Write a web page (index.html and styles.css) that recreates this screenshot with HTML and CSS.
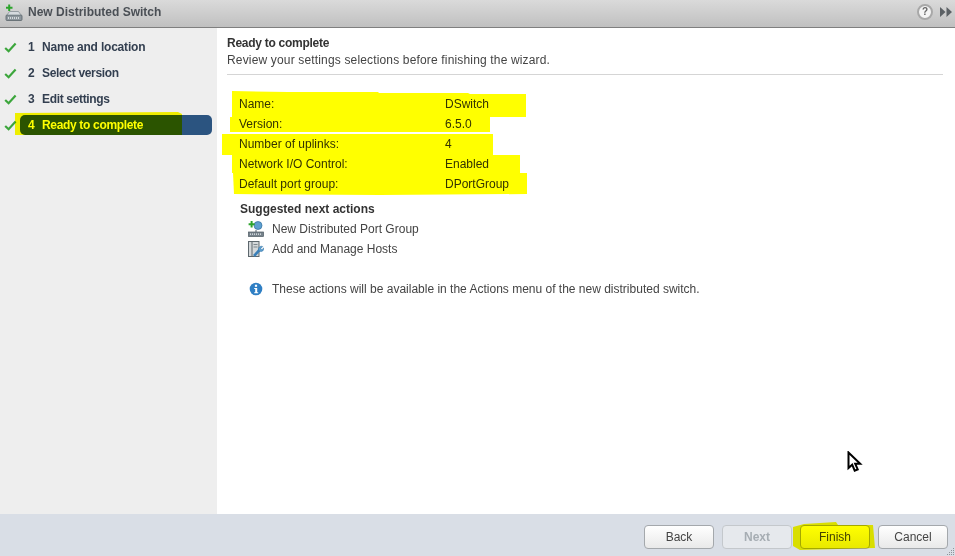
FILE: index.html
```html
<!DOCTYPE html>
<html lang="en">
<head>
<meta charset="utf-8">
<title>New Distributed Switch</title>
<link rel="stylesheet" href="styles.css">
</head>
<body>
<div class="wizard">
  <header class="titlebar">
    <svg class="title-icon" width="18" height="18" viewBox="0 0 18 18">
      <rect x="1" y="11" width="16" height="5.500" rx="1" fill="#8d969c" stroke="#59636a" stroke-width=".8"/>
      <path d="M2 11 4.500 7.500h9L16 11z" fill="#d5dade" stroke="#7d878d" stroke-width=".7"/>
      <path d="M3 14h12" stroke="#e9eef0" stroke-width="1.400" stroke-dasharray="1 1"/>
      <path d="M4.200 .5v6.500M1 3.700h6.500" stroke="#2da42d" stroke-width="2"/>
    </svg>
    <span class="title-text">New Distributed Switch</span>
    <span class="title-tools">
      <span class="help">?</span>
      <svg width="12" height="10" viewBox="0 0 12 10"><path d="M0 0l5.500 5-5.500 5zM6.500 0l5.500 5-5.500 5z" fill="#5c6165"/></svg>
    </span>
  </header>
  <div class="body">
    <nav class="steps">
      <div class="step"><svg class="check" width="13" height="11" viewBox="0 0 13 11"><path d="M1.200 6 4.600 9.200 11.600 1.600" fill="none" stroke="#3ca63c" stroke-width="2.200"/></svg><span class="pill"><b class="num">1</b><b class="label">Name and location</b></span></div>
      <div class="step"><svg class="check" width="13" height="11" viewBox="0 0 13 11"><path d="M1.200 6 4.600 9.200 11.600 1.600" fill="none" stroke="#3ca63c" stroke-width="2.200"/></svg><span class="pill"><b class="num">2</b><b class="label tight">Select version</b></span></div>
      <div class="step"><svg class="check" width="13" height="11" viewBox="0 0 13 11"><path d="M1.200 6 4.600 9.200 11.600 1.600" fill="none" stroke="#3ca63c" stroke-width="2.200"/></svg><span class="pill"><b class="num">3</b><b class="label tight">Edit settings</b></span></div>
      <div class="step"><svg class="check" width="13" height="11" viewBox="0 0 13 11"><path d="M1.200 6 4.600 9.200 11.600 1.600" fill="none" stroke="#3ca63c" stroke-width="2.200"/></svg><span class="pill active"><b class="num">4</b><b class="label tight">Ready to complete</b></span></div>
    </nav>
    <main class="content">
      <h1 class="page-title">Ready to complete</h1>
      <p class="page-sub">Review your settings selections before finishing the wizard.</p>
      <dl class="summary">
        <div class="row"><dt>Name:</dt><dd>DSwitch</dd></div>
        <div class="row"><dt>Version:</dt><dd>6.5.0</dd></div>
        <div class="row"><dt>Number of uplinks:</dt><dd>4</dd></div>
        <div class="row"><dt>Network I/O Control:</dt><dd>Enabled</dd></div>
        <div class="row"><dt>Default port group:</dt><dd>DPortGroup</dd></div>
      </dl>
      <h2 class="next-title">Suggested next actions</h2>
      <div class="action">
        <svg class="a-icon" width="16" height="16" viewBox="0 0 16 16">
          <circle cx="10" cy="4.500" r="4" fill="#5d9fd0" stroke="#2f6f9e" stroke-width=".7"/>
          <path d="M3.600 0v6.400M.6 3.200h6" stroke="#2da42d" stroke-width="2"/>
          <path d="M8 9v2" stroke="#55606a"/>
          <rect x=".5" y="11" width="15" height="4.500" fill="#77838c" stroke="#4c5860" stroke-width=".7"/>
          <path d="M2 13.200h12" stroke="#e9eef0" stroke-width="1.200" stroke-dasharray="1 1"/>
        </svg>
        <span>New Distributed Port Group</span>
      </div>
      <div class="action">
        <svg class="a-icon" width="16" height="16" viewBox="0 0 16 16">
          <rect x=".5" y=".5" width="10.500" height="15" fill="#d4d8da" stroke="#5d676d"/>
          <path d="M4 .5v15" stroke="#5d676d"/>
          <path d="M5.500 3.500h4M5.500 6h4" stroke="#7d878d"/>
          <path d="M6 15 11.500 9" stroke="#3a7fb8" stroke-width="2.600"/>
          <path d="M10.500 9a3 3 0 0 1 4.200-3.500l-2 2 1.200 1.200 2-1.800a3 3 0 0 1-4.400 3.200z" fill="#5d9fd0" stroke="#2f6f9e" stroke-width=".5"/>
        </svg>
        <span>Add and Manage Hosts</span>
      </div>
      <div class="note">
        <svg class="a-icon" width="14" height="14" viewBox="0 0 14 14">
          <circle cx="7" cy="7" r="6.300" fill="#2f7fc4"/>
          <rect x="5.900" y="2.700" width="2.200" height="2.100" fill="#fff"/>
          <path d="M5.200 6h3v4.200h1v1H5.200v-1h1V7h-1z" fill="#fff"/>
        </svg>
        <span>These actions will be available in the Actions menu of the new distributed switch.</span>
      </div>
    </main>
  </div>
  <footer class="footer">
    <button class="btn" type="button">Back</button>
    <button class="btn disabled" type="button">Next</button>
    <button class="btn" type="button">Finish</button>
    <button class="btn" type="button">Cancel</button>
  </footer>
  <svg class="marker" width="955" height="556" viewBox="0 0 955 556">
    <g fill="#ffff00">
      <path d="M15 113 178 112 182 114V135H15z"/>
      <path d="M232 91 288 92 378 92 379 93 468 93 470 94 526 94V117H232z"/>
      <path d="M230 117H490V132H230z"/>
      <path d="M222 134 493 134V155H222z"/>
      <path d="M232 155H520V173H232z"/>
      <path d="M233 173H527V194L380 195 234 194z"/>
      <path d="M804 524 836 522 838 525 873 525 875 548 800 550 793 546 793 527z"/>
    </g>
  </svg>
  <svg class="cursor" width="16" height="22" viewBox="0 0 16 22">
    <path d="M1.500 1.500V17l3.700-3.300 2.500 6 3-1.300-2.500-5.700h5z" fill="#fff" stroke="#000" stroke-width="2"/>
  </svg>
  <svg class="grip" width="10" height="10" viewBox="0 0 10 10">
    <g fill="#8f949a">
      <rect x="8" y="2" width="1" height="1"/>
      <rect x="6" y="4" width="1" height="1"/><rect x="8" y="4" width="1" height="1"/>
      <rect x="4" y="6" width="1" height="1"/><rect x="6" y="6" width="1" height="1"/><rect x="8" y="6" width="1" height="1"/>
      <rect x="2" y="8" width="1" height="1"/><rect x="4" y="8" width="1" height="1"/><rect x="6" y="8" width="1" height="1"/><rect x="8" y="8" width="1" height="1"/>
    </g>
  </svg>
</div>
</body>
</html>
```
FILE: styles.css
```css
* { box-sizing: border-box; }
html, body { margin: 0; height: 100%; }
body {
  font-family: "Liberation Sans", Arial, sans-serif;
  font-size: 12px;
  color: #333;
  background: #fff;
  overflow: hidden;
}
.wizard {
  position: relative;
  width: 955px;
  height: 556px;
  display: flex;
  flex-direction: column;
}
.titlebar {
  height: 28px;
  flex: none;
  display: flex;
  align-items: center;
  padding: 0 3px 3px 5px;
  background: linear-gradient(#dadada, #c0c0c0);
  border-bottom: 1px solid #7f7f7f;
}
.title-icon { flex: none; margin-right: 5px; margin-top: 1px; }
.title-text { font-weight: bold; font-size: 12px; color: #4a4f55; }
.title-tools { margin-left: auto; display: flex; align-items: center; gap: 7px; }
.help {
  width: 16px;
  height: 16px;
  border-radius: 50%;
  border: 2px solid #a8a8a8;
  background: #f4f4f4;
  color: #666;
  font-weight: bold;
  font-size: 10px;
  line-height: 12px;
  text-align: center;
}
.body { flex: 1; display: flex; min-height: 0; }
.steps {
  width: 217px;
  flex: none;
  background: #eeeeee;
  padding: 6px 5px 0 4px;
  display: flex;
  flex-direction: column;
}
.step { height: 26px; display: flex; align-items: center; }
.check { flex: none; margin-right: 3px; }
.pill {
  flex: 1;
  height: 20px;
  display: flex;
  align-items: center;
  padding-left: 8px;
  border-radius: 5px;
  color: #333f50;
}
.pill.active { background: #2b5480; color: #fff; }
.num { width: 14px; flex: none; font-weight: bold; }
.label { font-weight: bold; letter-spacing: -.2px; }
.label.tight { letter-spacing: -.33px; }
.content { flex: 1; padding: 8px 12px 0 10px; }
.page-title { margin: 0; font-size: 12px; line-height: 14px; font-weight: bold; color: #333; letter-spacing: -.27px; }
.page-sub {
  margin: 3px 0 0;
  font-size: 12px;
  line-height: 15px;
  color: #444;
  padding-bottom: 6px;
  border-bottom: 1px solid #d5d5d5;
  letter-spacing: .16px;
}
.summary { margin: 19px 0 0 12px; }
.row { display: flex; height: 20px; align-items: center; }
.row dt { width: 206px; flex: none; }
.row dd { margin: 0; }
.next-title { margin: 7px 0 2px 13px; font-size: 12px; line-height: 16px; font-weight: bold; color: #333; }
.action { display: flex; align-items: center; height: 20px; margin-left: 21px; color: #444; }
.a-icon { flex: none; margin-right: 8px; }
.note { display: flex; align-items: center; height: 20px; margin: 20px 0 0 22px; color: #444; }
.note .a-icon { margin-right: 9px; }
.footer {
  height: 42px;
  flex: none;
  background: #d9dee6;
  display: flex;
  justify-content: flex-end;
  align-items: center;
  gap: 8px;
  padding: 4px 7px 0 0;
}
.btn {
  width: 70px;
  height: 24px;
  padding: 0;
  font: 12px "Liberation Sans", Arial, sans-serif;
  color: #444;
  background: linear-gradient(#fff, #e9e9e9);
  border: 1px solid #a4a8ac;
  border-radius: 4px;
}
.btn.disabled {
  font-weight: bold;
  color: #a6adb3;
  background: #e6e9ed;
  border-color: #c4c8cc;
}
.marker {
  position: absolute;
  left: 0;
  top: 0;
  mix-blend-mode: multiply;
  pointer-events: none;
}
.cursor { position: absolute; left: 847px; top: 451px; }
.grip { position: absolute; right: 0; bottom: 0; }
```
